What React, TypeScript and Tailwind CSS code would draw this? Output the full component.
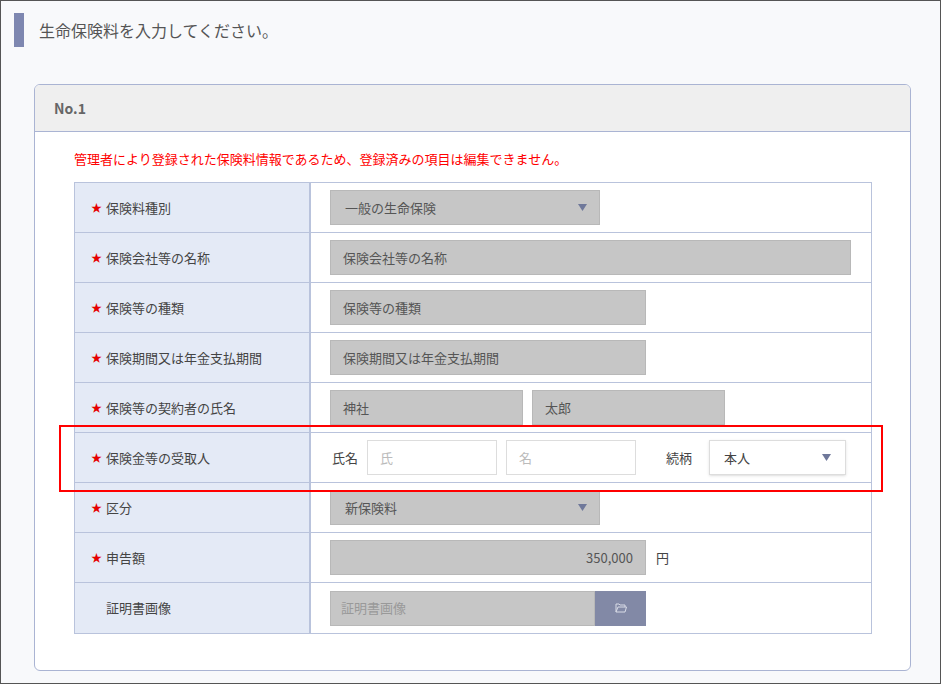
import React from "react";

const F = { fontFamily: '"Noto Sans CJK JP","Noto Sans",sans-serif' };

function Star() {
  return <span className="text-[#e60000] text-[11px] mr-[4px]">★</span>;
}
function Tri() {
  return <svg width="9" height="7" viewBox="0 0 9 7"><path d="M0 0h9L4.5 7z" fill="#6f789a" /></svg>;
}
function Gray({ w, children, right }: { w: string; children?: React.ReactNode; right?: boolean }) {
  return (
    <div className={`${w} h-[35px] bg-[#c6c6c6] border border-[#b8b8b8] flex items-center px-[12px] text-[13px] text-[#555] ${right ? "justify-end" : ""}`}>
      {children}
    </div>
  );
}
function Row({ label, req = true, children }: { label: string; req?: boolean; children: React.ReactNode }) {
  return (
    <div className="flex h-[50px] border-b border-[#b9c3dc] last:border-b-0">
      <div className="w-[236px] bg-[#e4eaf6] border-r-2 border-[#b9c3dc] flex items-center pl-[16px] text-[13px] text-[#444]">
        {req ? <Star /> : <span className="w-[15px]" />}
        {label}
      </div>
      <div className="flex-1 flex items-center pl-[19px] gap-[9px] bg-white">{children}</div>
    </div>
  );
}

export default function App() {
  return (
    <div style={F} className="w-[941px] h-[684px] bg-[#f8f9fb] border border-[#555] relative overflow-hidden">
      <div className="flex items-center mt-[12px] ml-[13px] h-[34px]">
        <div className="w-[10px] h-[34px] bg-[#7e87b0]" />
        <div className="ml-[15px] text-[16px] text-[#555]">生命保険料を入力してください。</div>
      </div>
      <div className="ml-[33px] mt-[37px] w-[877px] h-[587px] bg-white border border-[#aab4d3] rounded-[6px] overflow-hidden">
        <div className="h-[47px] bg-[#efefef] border-b border-[#aab4d3] flex items-center pl-[19px] text-[14px] font-bold text-[#666]">No.1</div>
        <div className="pl-[39px] pt-[17px] text-[13px] text-[#f00] h-[50px]">管理者により登録された保険料情報であるため、登録済みの項目は編集できません。</div>
        <div className="ml-[39px] w-[798px] border border-[#b9c3dc]">
          <Row label="保険料種別"><Gray w="w-[270px]"><span className="pl-[2px] flex-1">一般の生命保険</span><Tri /></Gray></Row>
          <Row label="保険会社等の名称"><Gray w="w-[521px]">保険会社等の名称</Gray></Row>
          <Row label="保険等の種類"><Gray w="w-[316px]">保険等の種類</Gray></Row>
          <Row label="保険期間又は年金支払期間"><Gray w="w-[316px]">保険期間又は年金支払期間</Gray></Row>
          <Row label="保険等の契約者の氏名"><Gray w="w-[193px]">神社</Gray><Gray w="w-[193px]">太郎</Gray></Row>
          <Row label="保険金等の受取人">
            <span className="text-[13px] text-[#444] ml-[2px]">氏名</span>
            <div className="w-[130px] h-[35px] border border-[#ddd] flex items-center px-[12px] text-[13px] text-[#bbb]">氏</div>
            <div className="w-[130px] h-[35px] border border-[#ddd] flex items-center px-[12px] text-[13px] text-[#bbb]">名</div>
            <span className="text-[13px] text-[#444] ml-[21px] mr-[8px]">続柄</span>
            <div className="w-[137px] h-[35px] border border-[#ddd] shadow-sm flex items-center px-[14px] text-[13px] text-[#444]"><span className="flex-1">本人</span><Tri /></div>
          </Row>
          <Row label="区分"><Gray w="w-[270px]"><span className="pl-[2px] flex-1">新保険料</span><Tri /></Gray></Row>
          <Row label="申告額"><Gray w="w-[316px]" right>350,000</Gray><span className="text-[13px] text-[#444] ml-[1px]">円</span></Row>
          <Row label="証明書画像" req={false}>
            <div className="flex w-[316px] h-[35px]">
              <div className="flex-1 bg-[#c6c6c6] border border-[#b8b8b8] flex items-center px-[10px] text-[13px] text-[#999]">証明書画像</div>
              <div className="w-[51px] bg-[#8289a6] flex items-center justify-center">
                <svg width="12" height="10" viewBox="0 0 12 10"><path d="M1 1h3l1 1h5v2M1 1v8h9l1.5-5H3L1 9" fill="none" stroke="#d8dbe6" strokeWidth="1" /></svg>
              </div>
            </div>
          </Row>
        </div>
      </div>
      <div className="absolute left-[58px] top-[424px] w-[824px] h-[67px] border-2 border-[#f00]" />
    </div>
  );
}
